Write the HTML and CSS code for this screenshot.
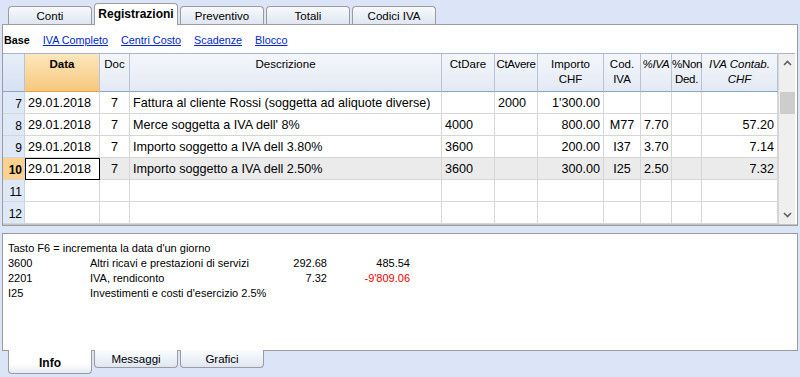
FILE: index.html
```html
<!DOCTYPE html>
<html lang="it">
<head>
  <meta charset="UTF-8">
  <title>Registrazioni</title>
  <link rel="stylesheet" href="styles.css">
</head>
<body>
  <!-- Schede superiori -->
  <div class="tabbar top">
    <span class="tab">Conti</span>
    <span class="tab active">Registrazioni</span>
    <span class="tab">Preventivo</span>
    <span class="tab">Totali</span>
    <span class="tab">Codici IVA</span>
  </div>

  <div class="panel main">
    <div class="views">
      <b>Base</b>
      <a href="#">IVA Completo</a>
      <a href="#">Centri Costo</a>
      <a href="#">Scadenze</a>
      <a href="#">Blocco</a>
    </div>

    <div class="grid">
      <table class="journal">
        <colgroup>
          <col style="width:22px"><col style="width:75px"><col style="width:30px">
          <col style="width:312px"><col style="width:53px"><col style="width:43px">
          <col style="width:66px"><col style="width:37px"><col style="width:31px">
          <col style="width:30px"><col style="width:76px">
        </colgroup>
        <thead>
          <tr>
            <th class="num"></th>
            <th class="sorted">Data</th>
            <th>Doc</th>
            <th>Descrizione</th>
            <th>CtDare</th>
            <th class="tight">CtAvere</th>
            <th>Importo<br>CHF</th>
            <th>Cod.<br>IVA</th>
            <th class="it tight">%IVA</th>
            <th class="tight">%Non<br>Ded.</th>
            <th class="it">IVA Contab.<br>CHF</th>
          </tr>
        </thead>
        <tbody>
          <tr>
            <td class="num">7</td><td>29.01.2018</td><td class="c">7</td>
            <td>Fattura al cliente Rossi (soggetta ad aliquote diverse)</td>
            <td></td><td>2000</td><td class="r">1'300.00</td>
            <td></td><td></td><td></td><td></td>
          </tr>
          <tr>
            <td class="num">8</td><td>29.01.2018</td><td class="c">7</td>
            <td>Merce soggetta a IVA dell' 8%</td>
            <td>4000</td><td></td><td class="r">800.00</td>
            <td class="c">M77</td><td class="r">7.70</td><td></td><td class="r">57.20</td>
          </tr>
          <tr>
            <td class="num">9</td><td>29.01.2018</td><td class="c">7</td>
            <td>Importo soggetto a IVA dell 3.80%</td>
            <td>3600</td><td></td><td class="r">200.00</td>
            <td class="c">I37</td><td class="r">3.70</td><td></td><td class="r">7.14</td>
          </tr>
          <tr class="current">
            <td class="num">10</td><td class="focus">29.01.2018</td><td class="c">7</td>
            <td>Importo soggetto a IVA dell 2.50%</td>
            <td>3600</td><td></td><td class="r">300.00</td>
            <td class="c">I25</td><td class="r">2.50</td><td></td><td class="r">7.32</td>
          </tr>
          <tr>
            <td class="num">11</td><td></td><td></td><td></td><td></td><td></td>
            <td></td><td></td><td></td><td></td><td></td>
          </tr>
          <tr>
            <td class="num">12</td><td></td><td></td><td></td><td></td><td></td>
            <td></td><td></td><td></td><td></td><td></td>
          </tr>
        </tbody>
      </table>

      <div class="vscroll">
        <svg class="arrow" width="9" height="6" viewBox="0 0 9 6"><polyline points="1,5 4.5,1.5 8,5" fill="none" stroke="#606060" stroke-width="1.6"/></svg>
        <span class="thumb"></span>
        <span class="track"></span>
        <svg class="arrow" width="9" height="6" viewBox="0 0 9 6"><polyline points="1,1 4.5,4.5 8,1" fill="none" stroke="#606060" stroke-width="1.6"/></svg>
      </div>
    </div>
  </div>

  <!-- Pannello informazioni -->
  <div class="panel info">
    <p class="hint">Tasto F6 = incrementa la data d'un giorno</p>
    <div class="info-rows">
      <span>3600</span><span>Altri ricavi e prestazioni di servizi</span><span class="r">292.68</span><span class="r">485.54</span>
      <span>2201</span><span>IVA, rendiconto</span><span class="r">7.32</span><span class="r neg">-9'809.06</span>
      <span>I25</span><span>Investimenti e costi d'esercizio 2.5%</span><span></span><span></span>
    </div>
  </div>

  <div class="tabbar bottom">
    <span class="tab active">Info</span>
    <span class="tab">Messaggi</span>
    <span class="tab">Grafici</span>
  </div>
</body>
</html>
```

FILE: styles.css
```css
/* ----- GENERALE ----- */
body {
  margin: 0;
  background: #dbe5f7;
  font-family: 'Liberation Sans', Arial, sans-serif;
  font-size: 11px;
  color: #000;
}

/* ----- SCHEDE ----- */
.tabbar {
  display: flex;
  gap: 2px;
  padding-left: 8px;
  position: relative;
  z-index: 2;
}

.tabbar.top {
  height: 24px;
  align-items: flex-end;
}

.tabbar.bottom {
  align-items: flex-start;
  margin-top: -1px;
}

.tab {
  box-sizing: border-box;
  width: 84px;
  height: 18px;
  display: flex;
  align-items: center;
  justify-content: center;
  border: 1px solid #9c9c9c;
  background: linear-gradient(#f7f9fc, #dfe6f2);
  font-size: 11.5px;
}

.top .tab {
  border-bottom: none;
  border-radius: 4px 4px 0 0;
}

.top .tab.active {
  height: 22px;
  margin-bottom: -1px;
  background: #fff;
  font-weight: bold;
  font-size: 12px;
  padding-bottom: 2px;
}

.bottom .tab {
  border-top: none;
  border-radius: 0 0 4px 4px;
  background: linear-gradient(#fbfcfe, #dfe6f2);
}

.bottom .tab.active {
  height: 24px;
  background: linear-gradient(#fff 60%, #e4eaf5);
  font-weight: bold;
  font-size: 12px;
  padding-top: 2px;
}

/* ----- PANNELLI ----- */
.panel {
  margin: 0 2px;
  border: 1px solid #9c9c9c;
  background: #fff;
}

.views {
  height: 28px;
  display: flex;
  align-items: center;
  gap: 13px;
  padding-left: 1px;
  padding-top: 1px;
  box-sizing: border-box;
  font-size: 10.8px;
}

.views a {
  color: #0026d0;
}

/* ----- TABELLA REGISTRAZIONI ----- */
.grid {
  display: flex;
  border-bottom: 1px solid #c4c4c4;
}

.journal {
  table-layout: fixed;
  width: 775px;
  border-collapse: separate;
  border-spacing: 0;
  font-size: 12.6px;
}

.journal th,
.journal td {
  box-sizing: border-box;
  border-right: 1px solid #d6d6d6;
  border-bottom: 1px solid #d6d6d6;
  padding: 0 3px;
  white-space: nowrap;
  overflow: hidden;
}

.journal thead tr {
  height: 39px;
}

.journal th {
  vertical-align: top;
  padding-top: 3px;
  font-size: 11.5px;
  font-weight: normal;
  line-height: 15px;
  background: linear-gradient(#f4f6fb, #e3e9f4);
  border-top: 1px solid #a9b6c9;
  border-right-color: #b7c3d6;
  border-bottom: 1px solid #8ea3c2;
}

.journal th.sorted {
  font-weight: bold;
  background: linear-gradient(#fce7bd, #f7c77c);
  border-bottom-color: #f0a040;
}

.journal th.num {
  background: linear-gradient(#e7eef9, #d6e1f2);
}

.journal th.it {
  font-style: italic;
}

.journal th.tight {
  padding: 3px 0 0;
  letter-spacing: -0.3px;
  overflow: visible;
}

.journal tbody tr {
  height: 22px;
}

.journal td.num {
  background: #dfe8f6;
  text-align: right;
  padding: 2px 2px 0 0;
  font-size: 12px;
  border-right-color: #c8d3e4;
}

.journal td {
  padding-top: 1px;
}

.journal .r {
  text-align: right;
}

.journal .c {
  text-align: center;
}

.journal tr.current td {
  background: #ebebeb;
}

.journal tr.current td.num {
  background: #fdd28f;
  font-weight: bold;
}

.journal tr.current td.focus {
  background: #fff;
  outline: 1px solid #000;
  outline-offset: -1px;
}

/* ----- BARRA DI SCORRIMENTO ----- */
.vscroll {
  width: 17px;
  display: flex;
  flex-direction: column;
  align-items: center;
  background: #efefef;
  border-top: 1px solid #a9b6c9;
  border-left: 1px solid #d6d6d6;
  padding: 6px 0 6px;
  box-sizing: border-box;
}

.vscroll .thumb {
  width: 15px;
  height: 22px;
  background: #cdcdcd;
  margin-top: 26px;
}

.vscroll .track {
  flex: 1;
}

/* ----- INFO ----- */
.panel.info {
  margin-top: 7px;
  height: 118px;
  box-sizing: border-box;
  padding: 7px 5px 0;
}

.hint {
  margin: 0;
  line-height: 15px;
}

.info-rows {
  display: grid;
  grid-template-columns: 82px 170px 67px 83px;
  line-height: 15px;
  white-space: nowrap;
}

.info-rows .r {
  text-align: right;
}

.info-rows .neg {
  color: #f00000;
}
```
